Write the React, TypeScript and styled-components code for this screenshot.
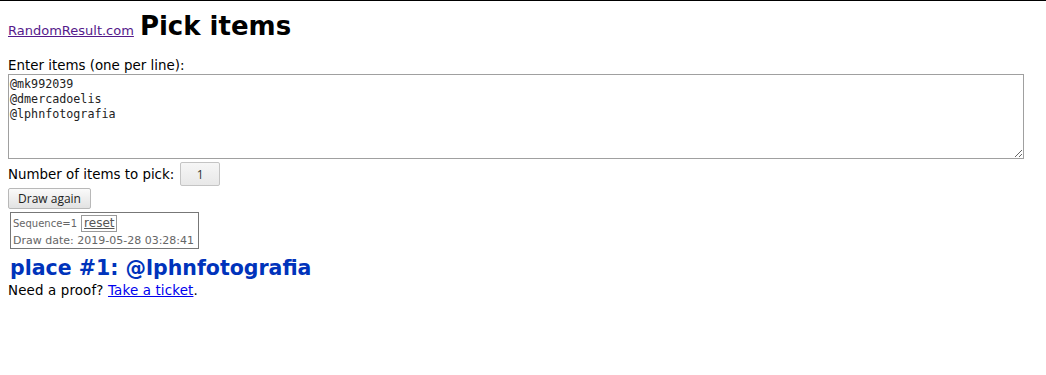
import React from "react";
import styled, { createGlobalStyle } from "styled-components";

const Global = createGlobalStyle`
  html, body { margin: 0; padding: 0; background: #fff; }
  body {
    border-top: 1px solid #000;
    padding: 0 8px 8px 8px;
    font-family: "DejaVu Sans", Verdana, sans-serif;
    font-size: 13.4px;
    color: #000;
  }
`;

const Header = styled.div`
  display: flex;
  align-items: baseline;
  gap: 6px;
  margin-top: 8px;
  height: 34px;
`;

const SiteLink = styled.a`
  font-size: 13px;
  color: #551a8b;
  text-decoration: underline;
`;

const Title = styled.h1`
  margin: 0;
  font-size: 26px;
  font-weight: bold;
  line-height: 34px;
`;

const Label = styled.div`
  margin-top: 15px;
  line-height: 16px;
`;

const ItemsArea = styled.textarea`
  display: block;
  box-sizing: border-box;
  width: 1016px;
  height: 85px;
  margin: 0;
  padding: 2px 1px;
  border: 1px solid #a0a0a0;
  font-family: "DejaVu Sans Mono", monospace;
  font-size: 11.7px;
  line-height: 15px;
  color: #222;
  resize: both;
  outline: none;
`;

const Row = styled.div`
  display: flex;
  align-items: center;
  gap: 6px;
  margin-top: 3px;
  height: 24px;
`;

const NumInput = styled.input`
  box-sizing: border-box;
  width: 40px;
  height: 24px;
  border: 1px solid #c4c4c4;
  border-radius: 2px;
  background: linear-gradient(#f6f6f6, #e8e8e8);
  text-align: center;
  font-family: "Open Sans", sans-serif;
  font-size: 12px;
  color: #333;
  padding: 0;
`;

const Button = styled.button`
  display: block;
  box-sizing: border-box;
  margin-top: 2px;
  width: 83px;
  height: 21px;
  border: 1px solid #b8b8b8;
  border-radius: 2px;
  background: linear-gradient(#fafafa, #e2e2e2);
  font-family: "Open Sans", sans-serif;
  font-size: 12px;
  color: #222;
  padding: 0;
`;

const InfoBox = styled.div`
  box-sizing: border-box;
  margin: 3px 0 0 2px;
  width: 189px;
  height: 37px;
  border: 1px solid #777;
  padding: 1px 2px 0 2px;
  font-size: 11px;
  color: #666;
  line-height: 17px;
`;

const SeqLine = styled.div`
  display: flex;
  align-items: center;
  font-size: 10px;
  height: 19px;
`;

const DateLine = styled.div`
  line-height: 15px;
  white-space: nowrap;
`;

const ResetBtn = styled.span`
  display: inline-block;
  border: 1px solid #999;
  padding: 0 2px;
  line-height: 15px;
  margin-left: 4px;
  color: #555;
  text-decoration: underline;
  font-size: 12px;
`;

const Result = styled.div`
  margin: 8px 0 0 2px;
  font-size: 20.5px;
  font-weight: bold;
  color: #0033bb;
  line-height: 22px;
`;

const Proof = styled.div`
  margin-top: 4px;
  line-height: 16px;
  letter-spacing: 0.15px;
`;

const TicketLink = styled.a`
  color: #0000ee;
  text-decoration: underline;
`;

export default function App() {
  return (
    <>
      <Global />
      <Header>
        <SiteLink href="#">RandomResult.com</SiteLink>
        <Title>Pick items</Title>
      </Header>
      <Label>Enter items (one per line):</Label>
      <ItemsArea
        defaultValue={"@mk992039\n@dmercadoelis\n@lphnfotografia"}
      />
      <Row>
        <span>Number of items to pick:</span>
        <NumInput defaultValue="1" />
      </Row>
      <Button>Draw again</Button>
      <InfoBox>
        <SeqLine>
          Sequence=1<ResetBtn>reset</ResetBtn>
        </SeqLine>
        <DateLine>Draw date: 2019-05-28 03:28:41</DateLine>
      </InfoBox>
      <Result>place #1: @lphnfotografia</Result>
      <Proof>
        Need a proof? <TicketLink href="#">Take a ticket</TicketLink>.
      </Proof>
    </>
  );
}
